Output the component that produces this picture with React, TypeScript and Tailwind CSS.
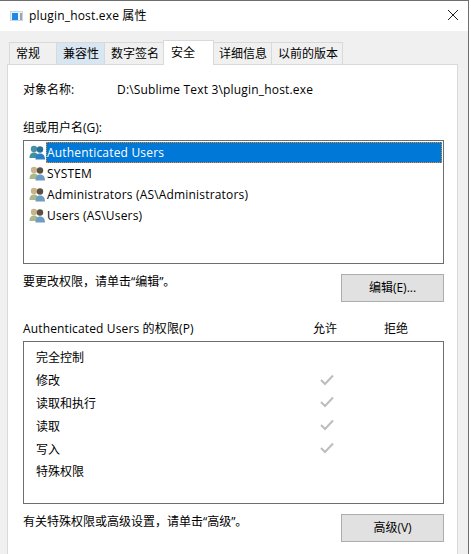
const font = "font-['Open_Sans','Noto_Sans_CJK_SC',sans-serif]";

function UserIcon({ selected = false }: { selected?: boolean }) {
  const a = selected ? "#3f8f9f" : "#a9b98a";
  const aHead = selected ? "#4a8fa5" : "#c8b48c";
  return (
    <svg width="17" height="17" viewBox="0 0 17 17" className="shrink-0">
      <circle cx="5" cy="5" r="3.2" fill={aHead} />
      <path d="M0.5 14 C0.5 10 2.5 8.5 5 8.5 C7.5 8.5 9.5 10 9.5 14 Z" fill={a} />
      <circle cx="11" cy="5.5" r="3.2" fill={selected ? "#2a6f9a" : "#5c5140"} />
      <path d="M6.5 15.5 C6.5 11 8.5 9.5 11 9.5 C13.5 9.5 16 11 16 15.5 Z" fill={selected ? "#2a7fc5" : "#6f9cc4"} />
    </svg>
  );
}

function Check() {
  return (
    <svg width="14" height="12" viewBox="0 0 14 12" className="shrink-0 -mt-[3px]">
      <path d="M1 6 L5 10 L13 1.5" fill="none" stroke="#bdbdbd" strokeWidth="2" />
    </svg>
  );
}

const tabs = [
  { t: "常规", w: "w-[47px]", c: "bg-[#f0f0f0]" },
  { t: "兼容性", w: "w-[48px]", c: "bg-[#d8e6f2]" },
  { t: "数字签名", w: "w-[59px]", c: "bg-[#f0f0f0]" },
];
const tabs2 = [
  { t: "详细信息", w: "w-[58px]", p: "pl-[5px]" },
  { t: "以前的版本", w: "w-[71px]", p: "pl-[6px]" },
];

const users = [
  "SYSTEM",
  "Administrators (AS\\Administrators)",
  "Users (AS\\Users)",
];

const perms: [string, boolean][] = [
  ["完全控制", false],
  ["修改", true],
  ["读取和执行", true],
  ["读取", true],
  ["写入", true],
  ["特殊权限", false],
];

function Btn({ children }: { children: React.ReactNode }) {
  return (
    <div className="w-[103px] h-[28px] flex items-center justify-center bg-[#e1e1e1] border border-[#adadad] shrink-0">
      {children}
    </div>
  );
}

export default function App() {
  return (
    <div className={`${font} w-[471px] h-[554px] overflow-hidden bg-white text-[12px] leading-[16px] text-black`}>
      <div className="w-[469px] h-[554px] border-t border-r border-[#6e6e6e] flex flex-col">
        <div className="h-[30px] bg-white flex items-center pl-[9px] pr-[8px] shrink-0">
          <svg width="15" height="11" viewBox="0 0 15 11" className="shrink-0">
            <rect x="1" y="0" width="13" height="10" fill="#c9d6e4" />
            <rect x="2" y="1" width="11" height="8" fill="#eef3f8" />
            <rect x="3" y="2" width="6" height="7" fill="#1f8ae6" />
            <rect x="11" y="2" width="2" height="7" fill="#9aa4ad" />
          </svg>
          <span className="ml-[5px] tracking-[0.18px]">plugin_host.exe 属性</span>
          <svg width="10" height="10" viewBox="0 0 10 10" className="ml-auto mr-[2px] -mt-[2px]">
            <path d="M0 0 L10 10 M10 0 L0 10" stroke="#222" strokeWidth="1" />
          </svg>
        </div>
        <div className="flex-1 bg-[#f0f0f0] pt-[9px] pl-[7px] pr-[10px] flex flex-col min-h-0">
          <div className="h-[24px] flex items-end pl-[2px] shrink-0 relative z-10">
            {tabs.map((x) => (
              <div key={x.t} className={`${x.w} h-[22px] ${x.c} border border-r-0 border-b-0 border-[#d9d9d9] flex items-center pl-[6px]`}>
                {x.t}
              </div>
            ))}
            <div className="w-[51px] h-[25px] -mb-[1px] bg-white border border-b-0 border-[#d9d9d9] flex items-center pl-[7px] pb-[1px]">安全</div>
            {tabs2.map((x) => (
              <div key={x.t} className={`${x.w} ${x.p} h-[22px] bg-[#f0f0f0] border border-l-0 border-b-0 border-[#d9d9d9] flex items-center`}>
                {x.t}
              </div>
            ))}
          </div>
          <div className="flex-1 bg-white border border-b-0 border-[#d9d9d9] pl-[15px] pr-[13px] pt-[17px] flex flex-col min-h-0">
            <div className="flex h-[16px] items-center">
              <span className="w-[94px]">对象名称:</span>
              <span className="tracking-[0.18px]">D:\Sublime Text 3\plugin_host.exe</span>
            </div>
            <div className="mt-[22px] h-[16px]">组或用户名(G):</div>
            <div className="mt-[4px] h-[124px] border border-[#6e6e6e] p-[1px] flex flex-col">
              <div className="h-[21px] flex items-center pl-[4px]">
                <UserIcon selected />
                <span className="flex-1 h-[21px] bg-[#0078d7] border border-dotted border-[#f08a24] text-white flex items-center tracking-[0.18px]">Authenticated Users</span>
              </div>
              {users.map((u) => (
                <div key={u} className="h-[21px] flex items-center pl-[4px]">
                  <UserIcon />
                  <span className="ml-[1px] tracking-[0.18px]">{u}</span>
                </div>
              ))}
            </div>
            <div className="mt-[10px] flex justify-between items-start">
              <span>{"要更改权限\uFF0C请单击\u201C编辑\u201D\u3002"}</span>
              <Btn>编辑(E)...</Btn>
            </div>
            <div className="mt-[19px] h-[16px] flex items-center">
              <span className="w-[290px] tracking-[0.14px]">Authenticated Users 的权限(P)</span>
              <span className="w-[71px]">允许</span>
              <span>拒绝</span>
            </div>
            <div className="mt-[4px] h-[163px] border border-[#6e6e6e] pt-[5px] pl-[12px]">
              {perms.map(([p, c]) => (
                <div key={p} className="h-[22.8px] flex items-center">
                  <span className="w-[284px]">{p}</span>
                  {c && <Check />}
                </div>
              ))}
            </div>
            <div className="mt-[10px] flex justify-between items-start">
              <span>{"有关特殊权限或高级设置\uFF0C请单击\u201C高级\u201D\u3002"}</span>
              <Btn>高级(V)</Btn>
            </div>
          </div>
        </div>
      </div>
    </div>
  );
}
